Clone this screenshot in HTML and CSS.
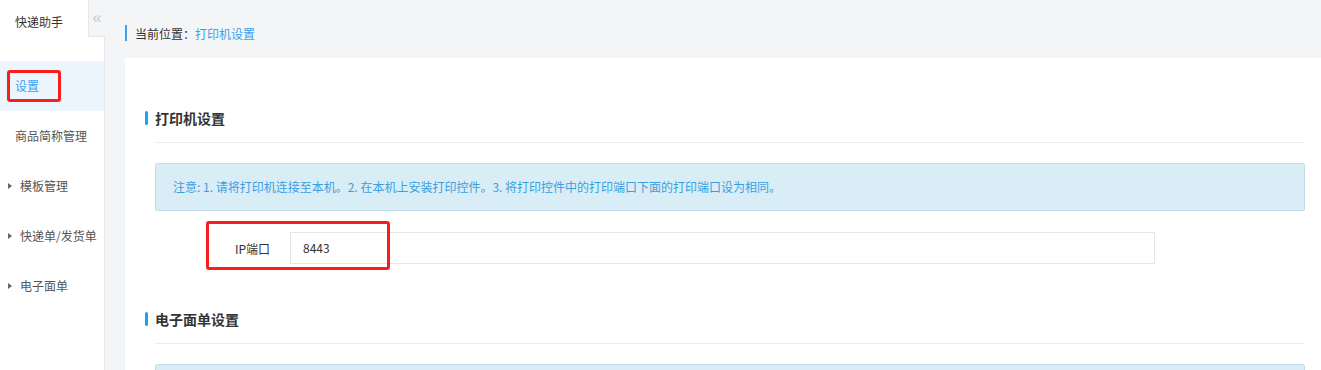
FILE: index.html
```html
<!DOCTYPE html>
<html lang="zh-CN">
<head>
<meta charset="utf-8">
<title>快递助手 - 打印机设置</title>
<link rel="stylesheet" href="styles.css">
</head>
<body>
<div class="app">
  <aside class="sidebar">
    <div class="brand">快递助手</div>
    <span class="collapse">«</span>
    <ul class="menu">
      <li class="item active"><span class="mark"></span>设置</li>
      <li class="item">商品简称管理</li>
      <li class="item sub"><span class="caret"></span>模板管理</li>
      <li class="item sub"><span class="caret"></span>快递单/发货单</li>
      <li class="item sub"><span class="caret"></span>电子面单</li>
    </ul>
  </aside>
  <main class="main">
    <div class="crumb"><span class="crumb-label">当前位置：</span><a class="crumb-link">打印机设置</a></div>
    <div class="card">
      <section class="section first">
        <div class="section-head"><h3 class="title">打印机设置</h3></div>
        <div class="alert">注意: 1. 请将打印机连接至本机。2. 在本机上安装打印控件。3. 将打印控件中的打印端口下面的打印端口设为相同。</div>
        <div class="form-row">
          <label class="label">IP端口</label>
          <div class="input">8443</div>
          <span class="mark mark-form"></span>
        </div>
      </section>
      <section class="section">
        <div class="section-head"><h3 class="title">电子面单设置</h3></div>
        <div class="alert"></div>
      </section>
    </div>
  </main>
</div>
</body>
</html>
```
FILE: styles.css
```css
* { box-sizing: border-box; }
html, body {
  margin: 0;
  padding: 0;
  height: 370px;
  overflow: hidden;
}
body {
  font-family: "Noto Sans CJK SC", "Microsoft YaHei", sans-serif;
  font-size: 12px;
  color: #333;
  background: #f4f5f7;
}
.app {
  display: flex;
  height: 370px;
}
.sidebar {
  position: relative;
  width: 105px;
  flex: none;
  background: #fff;
  border-right: 1px solid #e6e8eb;
}
.brand {
  height: 61px;
  line-height: 44px;
  padding-left: 15px;
  color: #333;
}
.collapse {
  position: absolute;
  top: 0;
  right: -1px;
  width: 17px;
  height: 37px;
  background: #f4f5f7;
  border-left: 1px solid #e6e8eb;
  border-bottom: 1px solid #e6e8eb;
  color: #c2cbd6;
  font-family: "Liberation Sans", sans-serif;
  font-size: 17px;
  line-height: 36px;
  text-align: center;
}
.menu {
  list-style: none;
  margin: 0;
  padding: 0;
}
.item {
  position: relative;
  height: 50px;
  line-height: 50px;
  padding-left: 15px;
  color: #555;
}
.item.active {
  background: #edf5fe;
  color: #3a9ff0;
}
.item.sub {
  padding-left: 8px;
  display: flex;
  align-items: center;
}
.caret {
  width: 0;
  height: 0;
  border-top: 3.5px solid transparent;
  border-bottom: 3.5px solid transparent;
  border-left: 4px solid #666;
  margin-right: 8px;
}
.mark {
  position: absolute;
  border: 3px solid #f81e1e;
  border-radius: 3px;
}
.item .mark {
  left: 7px;
  top: 9px;
  width: 54px;
  height: 32px;
}
.main {
  flex: 1;
  padding-left: 20px;
  min-width: 0;
}
.crumb {
  height: 58px;
  display: flex;
  align-items: center;
  padding-top: 8px;
}
.crumb::before {
  content: "";
  width: 2px;
  height: 16px;
  background: #3aa0ee;
  margin-right: 8px;
}
.crumb-label { color: #333; }
.crumb-link { color: #3aa0ee; }
.card {
  background: #fff;
  height: 312px;
  padding: 50px 16px 0 30px;
}
.section + .section { margin-top: 45px; }
.section-head {
  border-bottom: 1px solid #eaecef;
  padding-bottom: 14px;
}
.title {
  margin: 0 0 0 -10px;
  height: 20px;
  display: flex;
  align-items: center;
  font-size: 14px;
  font-weight: bold;
  color: #333;
}
.title::before {
  content: "";
  width: 3px;
  height: 14px;
  border-radius: 2px;
  background: #14a3f5;
  margin-right: 7px;
}
.alert {
  margin-top: 20px;
  height: 48px;
  line-height: 46px;
  padding-left: 17px;
  background: #d9edf7;
  border: 1px solid #c4dde9;
  border-radius: 2px;
  color: #3a9fe0;
}
.form-row {
  position: relative;
  margin-top: 21px;
  display: flex;
  align-items: center;
}
.label {
  width: 135px;
  padding-right: 20px;
  text-align: right;
  color: #333;
}
.input {
  width: 865px;
  height: 32px;
  line-height: 30px;
  border: 1px solid #e6e6e6;
  padding-left: 12px;
  color: #333;
}
.mark-form {
  left: 51px;
  top: -11px;
  width: 184px;
  height: 49px;
}
```
